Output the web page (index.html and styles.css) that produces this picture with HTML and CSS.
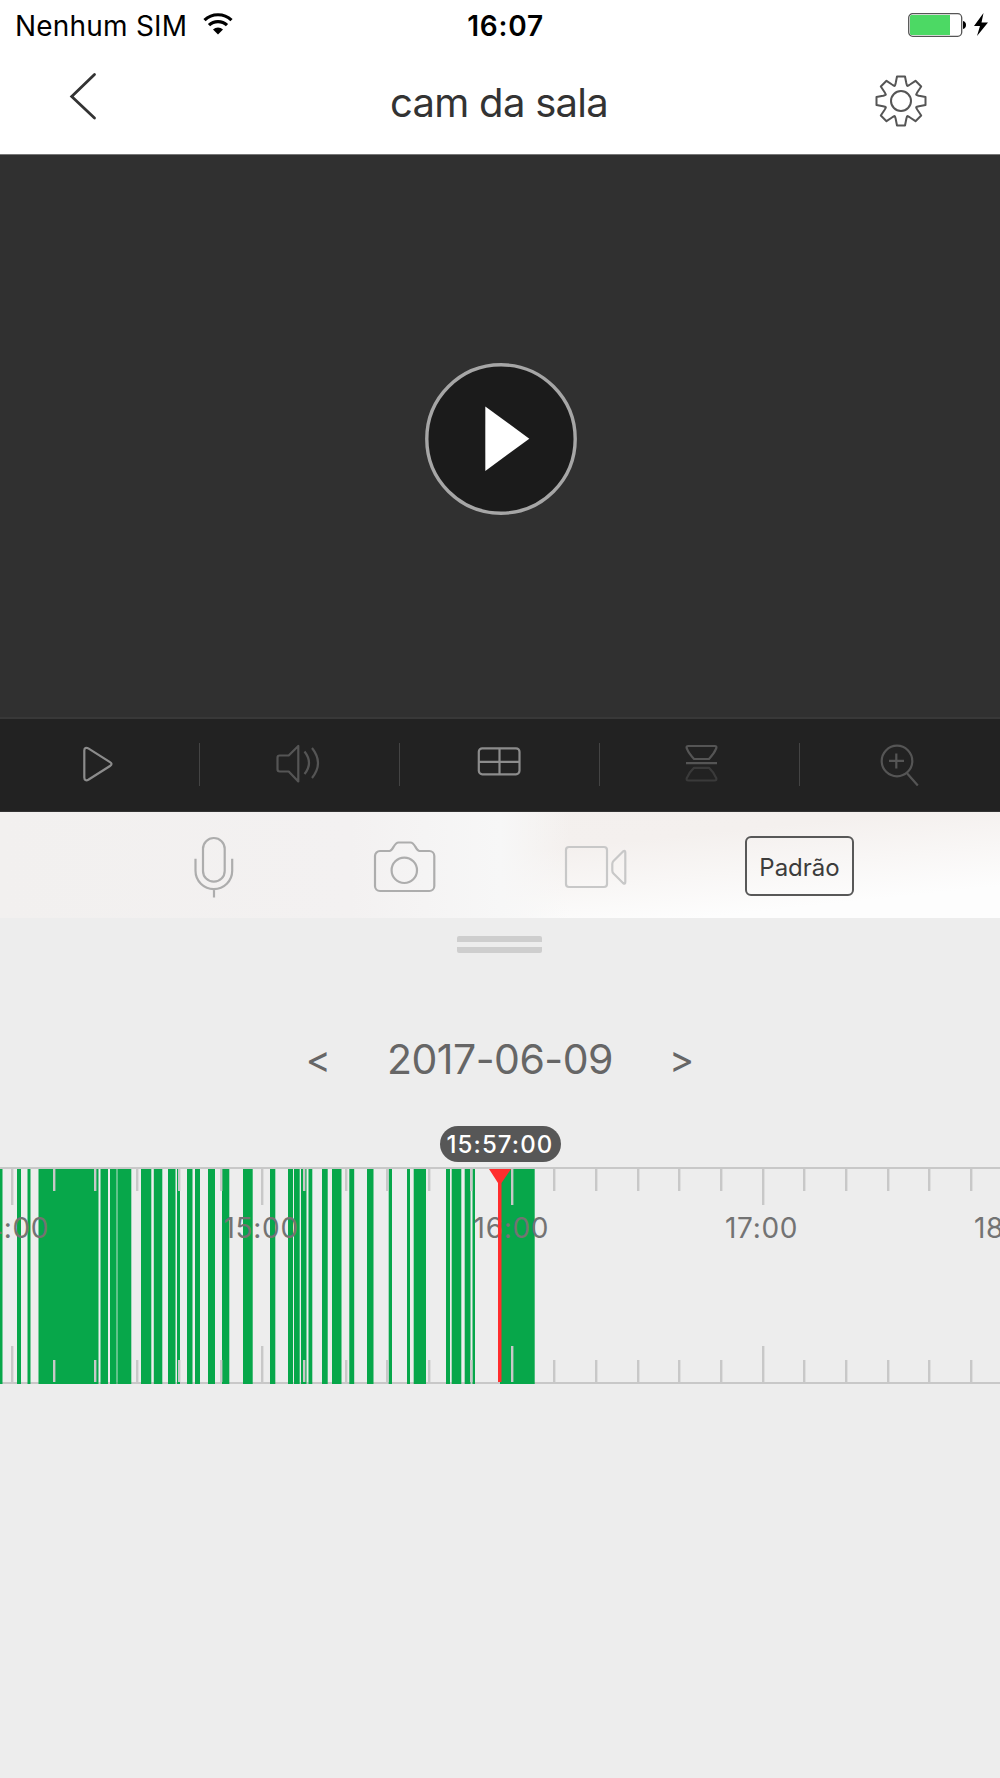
FILE: index.html
```html
<!DOCTYPE html>
<html lang="pt-BR">
<head>
    <meta charset="UTF-8">
    <meta name="viewport" content="width=device-width, initial-scale=1.0">
    <title>cam da sala</title>
    <link rel="stylesheet" href="styles.css">
</head>
<body>

<div class="status-bar">
    <div class="carrier">
        <span class="carrier-name">Nenhum SIM</span>
        <svg class="wifi" width="30" height="22" viewBox="0 0 30 22">
            <path d="M1.5 7.2a19.5 19.5 0 0 1 27 0M6 12.2a13 13 0 0 1 18 0" fill="none" stroke="#000" stroke-width="3.2"/>
            <path d="M15 21.5l-5-5.1a7.5 7.5 0 0 1 10 0z"/>
        </svg>
    </div>
    <div class="clock">16:07</div>
    <div class="battery">
        <svg width="81" height="26" viewBox="0 0 81 26">
            <rect x="1.7" y="1.7" width="53" height="22.6" rx="4" fill="#fff" stroke="#555" stroke-width="1.3"/>
            <path d="M4.500 3h38.500v20h-38.500a1.500 1.500 0 0 1-1.500-1.500v-17a1.500 1.500 0 0 1 1.500-1.500z" fill="#4cd964"/>
            <path d="M56 9c4 .5 4 7.500 0 8z"/>
            <path d="M76.500 1L67 14h6L70 24 81 10.500h-6.500z"/>
        </svg>
    </div>
</div>

<div class="nav">
    <svg class="back" width="40" height="56" viewBox="0 0 40 56">
        <path d="M31.500 6.500L8.700 28.500l22.800 21.500" fill="none" stroke="#333" stroke-width="2.800" stroke-linecap="round"/>
    </svg>
    <h1>cam da sala</h1>
    <svg class="gear" width="56" height="56" viewBox="-28 -28 56 56">
        <path d="M-4-24.500L4-24.500 5.300-18C6.200-14.300 5.700-14.500 9-16.500L14.500-20.200 20.200-14.500 16.500-9C14.500-5.700 14.300-6.200 18-5.300L24.500-4 24.500 4 18 5.300C14.300 6.200 14.500 5.700 16.500 9L20.200 14.500 14.500 20.200 9 16.500C5.700 14.500 6.200 14.300 5.300 18L4 24.500-4 24.500-5.300 18C-6.200 14.300-5.700 14.500-9 16.500L-14.500 20.200-20.200 14.500-16.500 9C-14.500 5.700-14.300 6.200-18 5.300L-24.500 4-24.500-4-18-5.300C-14.300-6.200-14.500-5.700-16.500-9L-20.200-14.500-14.500-20.200-9-16.500C-5.700-14.500-6.200-14.300-5.300-18Z"/>
        <circle r="10"/>
    </svg>
</div>

<div class="video">
    <svg width="152" height="152" viewBox="0 0 152 152">
        <circle cx="76" cy="76" r="74.200" fill="#1b1b1b" stroke="#a6a6a6" stroke-width="3.400"/>
        <path d="M60.300 43.500v64.500l44-32.300z" fill="#fff"/>
    </svg>
</div>

<div class="toolbar">
    <div class="tool">
        <svg width="60" height="60" viewBox="0 0 60 60">
            <path d="M14.300 15.500v27c0 2.500 1.800 3.600 4 2.300l21.700-13.800c2-1.300 2-2.500 0-3.800l-21.700-13.800c-2.200-1.300-4-.4-4 2.100z"/>
        </svg>
    </div>
    <div class="tool dim">
        <svg width="60" height="60" viewBox="0 0 60 60">
            <path d="M28.300 11v35.500l-9.600-10h-9c-1.500 0-2.200-.7-2.200-2.200v-11.600c0-1.500.7-2.200 2.200-2.200h9zM34.500 16.500q9 11.500 0 22.500M42 13q12 15 0 30"/>
        </svg>
    </div>
    <div class="tool">
        <svg width="60" height="60" viewBox="0 0 60 60">
            <rect x="8.800" y="13.300" width="40.700" height="26" rx="3.500"/>
            <path d="M29.500 13.300v26M8.800 26.800h40.700"/>
        </svg>
    </div>
    <div class="tool dim">
        <svg width="60" height="60" viewBox="0 0 60 60">
            <path d="M18.500 11h26c2 0 2.200 1.300 1.600 2.700-1.500 3.800-4 7-7.100 10.300h-15c-3.100-3.300-5.600-6.500-7.100-10.300-.6-1.400-.4-2.700 1.600-2.700zM16 28.200h31"/>
            <path class="faint" d="M18.500 45.500h26c2 0 2.200-1.300 1.600-2.700-1.500-3.800-4-7-7.100-10h-15c-3.100 3-5.600 6.200-7.100 10-.6 1.400-.4 2.700 1.600 2.700z"/>
        </svg>
    </div>
    <div class="tool dim">
        <svg width="60" height="60" viewBox="0 0 60 60">
            <circle cx="27" cy="26" r="15.300"/>
            <path d="M19 25.800h15M26.300 18.500v15M36.800 38l11 12.500"/>
        </svg>
    </div>
</div>

<div class="actions">
    <svg width="80" height="107" viewBox="0 0 80 107">
        <rect x="29" y="26" width="21.700" height="43.700" rx="10.800"/>
        <path d="M21.500 46.700v12a18.350 18.350 0 0 0 36.700 0v-12M40 77v8.500"/>
    </svg>
    <svg width="80" height="107" viewBox="0 0 80 107">
        <path d="M15 39h9.500c3.500 0 4.500-8.500 9-8.500h12c4.500 0 5.500 8.500 9 8.500h9.800a5 5 0 0 1 5 5v30a5 5 0 0 1-5 5h-49.300a5 5 0 0 1-5-5v-30a5 5 0 0 1 5-5z"/>
        <circle cx="39.300" cy="58.300" r="12.700"/>
    </svg>
    <svg class="light" width="80" height="107" viewBox="0 0 80 107">
        <rect x="10" y="35" width="41" height="40" rx="3"/>
        <path d="M67 39.500c1.700-1.200 2.300-.7 2.300 1v29.500c0 1.700-.6 2.200-2.300 1l-9.500-9.500c-1-1-1.200-1.500-1.200-3v-6.500c0-1.500.2-2 1.200-3z"/>
    </svg>
    <button class="quality">Padrão</button>
</div>

<div class="panel">
    <div class="handle"></div>
    <div class="date">
        <span class="arrow">&lt;</span>
        <span class="day">2017-06-09</span>
        <span class="arrow">&gt;</span>
    </div>
    <div class="current-time">15:57:00</div>
    <svg id="timeline" width="1000" height="218" viewBox="0 0 1000 218"></svg>
</div>

<script>
    const timeline = document.getElementById('timeline');
    const hourWidth = 250.2;
    const firstHour = 12.5; // x of 14:00

    // recorded segments: [start, end]
    const records = [
        [0, 2.5], [17, 21], [27.5, 30.5], [38.5, 98.5], [100.5, 108],
        [110, 116.6], [117.4, 131.3], [141, 151.3], [153.8, 162.3], [168, 175.5],
        [177, 180], [187, 192.5], [195, 200], [208, 215], [222, 229.3],
        [243, 252.7], [270, 275.3], [288, 293], [294, 299.7], [301, 306.5],
        [308.5, 312.3], [322, 327.7], [332, 341.5], [349.3, 354.2], [367, 373.5],
        [388.7, 392], [407, 410], [413.7, 426], [446, 450], [451.7, 461.3],
        [464.7, 470.5], [472.5, 475], [500, 534.7]
    ];

    function add(name, attrs, text) {
        const el = document.createElementNS('http://www.w3.org/2000/svg', name);
        for (let key in attrs) {
            el.setAttribute(key, attrs[key]);
        }
        if (text) {
            el.textContent = text;
        }
        timeline.appendChild(el);
    }

    add('rect', { x: 0, y: 0, width: 1000, height: 2, class: 'rule' });
    add('rect', { x: 0, y: 215, width: 1000, height: 2, class: 'rule' });

    records.forEach(([start, end]) => {
        add('rect', { x: start, y: 2, width: end - start, height: 215, class: 'record' });
    });

    // one tick every 10 minutes, a longer one on the hour
    for (let i = 0; i < 24; i++) {
        const x = Math.floor(firstHour + i * hourWidth / 6 - 1);
        const size = i % 6 === 0 ? 36 : 22;
        add('rect', { x: x, y: 2, width: 2.4, height: size, class: 'rule' });
        add('rect', { x: x, y: 215 - size, width: 2.4, height: size, class: 'rule' });
    }

    for (let h = 0; h < 5; h++) {
        add('text', { x: firstHour + h * hourWidth - 1.5, y: 71, class: 'hour' }, (14 + h) + ':00');
    }

    add('path', { d: 'M489 2h22l-9.500 14v199h-3.500v-199z', class: 'cursor' });
</script>

</body>
</html>
```
FILE: styles.css
```css
* {
    box-sizing: border-box;
}

body {
    margin: 0;
    width: 1000px;
    height: 1778px;
    display: flex;
    flex-direction: column;
    font-family: Inter, "Liberation Sans", sans-serif;
    background-color: #ededed;
    overflow: hidden;
}

svg {
    display: block;
}

.status-bar {
    display: grid;
    grid-template-columns: 1fr auto 1fr;
    align-items: center;
    height: 50px;
    padding: 0 12px 0 15px;
    background-color: #fff;
    color: #000;
}

.carrier {
    display: flex;
    align-items: center;
    gap: 16px;
}

.carrier-name {
    font-size: 28px;
    letter-spacing: 0.2px;
    padding-top: 1px;
}

.wifi {
    margin-bottom: 3px;
}

.clock {
    font-size: 28px;
    font-weight: 600;
    letter-spacing: 0.8px;
    padding: 1px 0 0 8px;
}

.battery {
    justify-self: end;
    margin-bottom: 1px;
}

.nav {
    display: flex;
    justify-content: space-between;
    align-items: center;
    height: 105px;
    padding: 0 71px 0 63px;
    background-color: #fff;
    border-bottom: 1px solid #777;
}

.back {
    margin-bottom: 12px;
}

h1 {
    margin: 0 0 0 22px;
    font-size: 40px;
    font-weight: 400;
    letter-spacing: -0.7px;
    color: #333;
}

.gear {
    margin-bottom: 2px;
    fill: none;
    stroke: #555;
    stroke-width: 2;
    stroke-linejoin: round;
}

.video {
    display: flex;
    align-items: center;
    justify-content: center;
    height: 564px;
    padding: 5px 0 0 2px;
    background-color: #303030;
    border-bottom: 2px solid #383838;
}

.toolbar {
    display: grid;
    grid-template-columns: repeat(5, 1fr);
    height: 93px;
    padding-bottom: 1px;
    background-color: #222;
    border-bottom: 1px solid #333;
}

.tool {
    display: flex;
    align-items: center;
    justify-content: center;
    background: linear-gradient(#444, #444) no-repeat right 24px / 1px 43px;
}

.tool:last-child {
    background: none;
}

.tool svg {
    fill: none;
    stroke: #8c8c8c;
    stroke-width: 2.2;
    stroke-linejoin: round;
}

.tool.dim svg {
    stroke: #555;
}

.tool .faint {
    stroke: #3a3a3a;
}

.actions {
    display: flex;
    align-items: center;
    gap: 111px;
    height: 106px;
    padding-left: 174px;
    background:
        linear-gradient(90deg, #f2f0ef 0, #f3f1f1 35%, #f7f7f7 50%, rgba(247, 247, 247, 0) 57%),
        linear-gradient(174deg, #f3efed 0, #f4f0ee 45%, #fdfdfd 85%);
}

.actions svg {
    fill: none;
    stroke: #adadad;
    stroke-width: 2.2;
    stroke-linejoin: round;
}

.actions svg.light {
    stroke: #c8c8c8;
}

.quality {
    width: 109px;
    height: 60px;
    margin: 2px 0 0 -2px;
    padding: 2px 0 0;
    border: 2px solid #585858;
    border-radius: 6px;
    background: none;
    font-family: inherit;
    font-size: 24px;
    color: #3c3c3c;
}

.panel {
    flex: 1;
    display: flex;
    flex-direction: column;
    align-items: center;
}

.handle {
    width: 85px;
    height: 17px;
    margin: 18px 2px 0 0;
    border-top: 6px solid #cecece;
    border-bottom: 6px solid #cecece;
    border-radius: 2px;
}

.date {
    display: flex;
    align-items: center;
    justify-content: center;
    gap: 56px;
    height: 60px;
    margin-top: 76px;
    color: #666;
}

.day {
    font-size: 41px;
    letter-spacing: -0.5px;
}

.arrow {
    font-size: 38px;
    line-height: 56px;
}

.current-time {
    width: 121px;
    height: 36px;
    margin-top: 37px;
    border-radius: 18px;
    background-color: #575757;
    color: #fff;
    font-size: 24px;
    font-weight: 500;
    letter-spacing: 1.1px;
    line-height: 38px;
    text-align: center;
}

#timeline {
    margin-top: 5px;
}

.rule {
    fill: #c8c8c8;
}

.record {
    fill: #07a74a;
}

.hour {
    fill: #737373;
    font-size: 28px;
    letter-spacing: 0.7px;
    text-anchor: middle;
}

.cursor {
    fill: #ff2d2d;
}
```
